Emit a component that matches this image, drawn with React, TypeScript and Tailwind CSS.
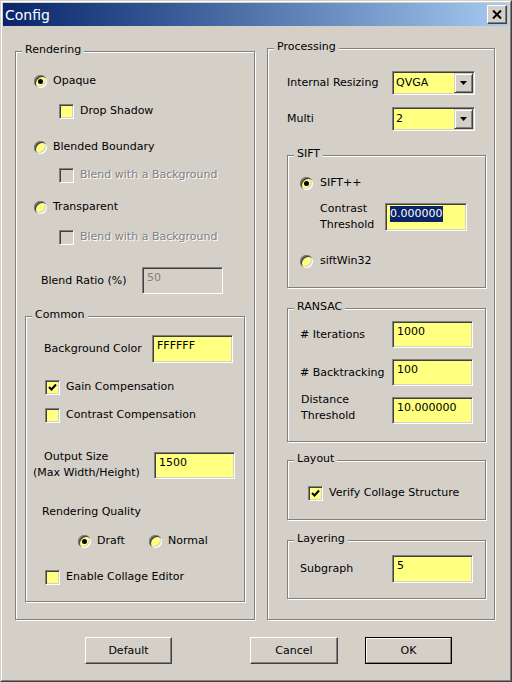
import type {ReactNode} from 'react';

const FACE = 'bg-[#d4d0c8]';

function Radio({checked}: {checked?: boolean}) {
  return (
    <span className="w-[13px] h-[13px] shrink-0 rounded-full bg-[#ffff80] shadow-[inset_1px_1px_0_#808080,inset_2px_2px_0_#404040,inset_-1px_-1px_0_#ffffff,inset_-2px_-2px_0_#d4d0c8] flex items-center justify-center">
      {checked && <span className="w-[5px] h-[5px] rounded-full bg-black" />}
    </span>
  );
}

function Check({checked, disabled}: {checked?: boolean; disabled?: boolean}) {
  return (
    <span
      className={`w-[15px] h-[15px] shrink-0 border border-t-[#808080] border-l-[#808080] border-b-white border-r-white shadow-[inset_1px_1px_0_#404040,inset_-1px_-1px_0_#d4d0c8] flex items-center justify-center ${
        disabled ? 'bg-[#d4d0c8]' : 'bg-[#ffff80]'
      }`}
    >
      {checked && (
        <svg width="9" height="9" viewBox="0 0 9 9">
          <polyline points="1,4 3.5,6.5 8,1.5" fill="none" stroke="#000" strokeWidth="2" />
        </svg>
      )}
    </span>
  );
}

function Edit({value, className, disabled, selected}: {value: string; className: string; disabled?: boolean; selected?: boolean}) {
  return (
    <div
      className={`shrink-0 border border-t-[#808080] border-l-[#808080] border-b-white border-r-white shadow-[inset_1px_1px_0_#404040,inset_-1px_-1px_0_#d4d0c8] pl-[4px] pt-[2px] leading-[16px] ${
        disabled ? 'bg-[#d4d0c8] text-[#808080]' : 'bg-[#ffff80] text-black'
      } ${className}`}
    >
      {selected ? <span className="bg-[#0a246a] text-white inline-block">{value}</span> : value}
    </div>
  );
}

function Combo({value}: {value: string}) {
  return (
    <div className="w-[83px] h-[24px] shrink-0 flex items-center border border-t-[#808080] border-l-[#808080] border-b-white border-r-white shadow-[inset_1px_1px_0_#404040,inset_-1px_-1px_0_#d4d0c8] bg-[#ffff80] p-[1px]">
      <span className="flex-1 pl-[2px]">{value}</span>
      <span className="w-[19px] h-[20px] bg-[#d4d0c8] border border-t-[#d4d0c8] border-l-[#d4d0c8] border-b-[#404040] border-r-[#404040] shadow-[inset_1px_1px_0_#ffffff,inset_-1px_-1px_0_#808080] flex items-center justify-center">
        <svg width="7" height="4" viewBox="0 0 7 4">
          <polygon points="0,0 7,0 3.5,4" fill="#000" />
        </svg>
      </span>
    </div>
  );
}

function Group({label, className, children}: {label: string; className: string; children?: ReactNode}) {
  return (
    <div className={`relative shrink-0 flex flex-col border border-[#808080] shadow-[inset_1px_1px_0_#ffffff,1px_1px_0_#ffffff] ${className}`}>
      <span className="absolute -top-[10px] left-[6px] px-[3px] bg-[#d4d0c8] leading-[16px] whitespace-nowrap">{label}</span>
      {children}
    </div>
  );
}

function Button({children, primary, className}: {children: ReactNode; primary?: boolean; className: string}) {
  if (primary) {
    return (
      <div className={`h-[27px] border border-black ${className}`}>
        <div className="w-full h-full flex items-center justify-center border border-t-white border-l-white border-b-[#808080] border-r-[#808080]">
          {children}
        </div>
      </div>
    );
  }
  return (
    <div
      className={`h-[27px] flex items-center justify-center border border-t-white border-l-white border-r-[#404040] border-b-[#404040] shadow-[inset_-1px_-1px_0_#808080] ${className}`}
    >
      {children}
    </div>
  );
}

const dim = 'text-[#808080] [text-shadow:1px_1px_0_#ffffff]';

export default function App() {
  return (
    <div
      className={`w-[512px] h-[682px] ${FACE} border border-t-[#d4d0c8] border-l-[#d4d0c8] border-r-[#404040] border-b-[#404040] font-['DejaVu_Sans',sans-serif] text-[11px] leading-[16px] text-black overflow-hidden`}
    >
      <div className="w-full h-full border border-t-white border-l-white border-r-[#808080] border-b-[#808080]">
        {/* title bar */}
        <div className="mt-[1px] ml-[1px] mr-[2px] h-[23px] bg-linear-to-r from-[#0a246a] to-[#a6caf0] flex items-center justify-between pl-[2px] pr-[1px]">
          <span className="text-white text-[14px] leading-[18px]">Config</span>
          <span className="w-[20px] h-[19px] bg-[#d4d0c8] border border-t-white border-l-white border-r-[#404040] border-b-[#404040] shadow-[inset_-1px_-1px_0_#808080] flex items-center justify-center">
            <svg width="10" height="9" viewBox="0 0 10 9">
              <path d="M1 0.5 L9 8.5 M9 0.5 L1 8.5" stroke="#000" strokeWidth="2" />
            </svg>
          </span>
        </div>

        <div className="flex items-start pl-[13px]">
          {/* left column */}
          <Group label="Rendering" className="mt-[25px] w-[240px] h-[569px]">
            <div className="flex items-center h-[16px] mt-[21px] ml-[18px] gap-[6px]">
              <Radio checked />
              <span>Opaque</span>
            </div>
            <div className="flex items-center h-[16px] mt-[14px] ml-[43px] gap-[6px]">
              <Check />
              <span>Drop Shadow</span>
            </div>
            <div className="flex items-center h-[16px] mt-[20px] ml-[18px] gap-[6px]">
              <Radio />
              <span>Blended Boundary</span>
            </div>
            <div className="flex items-center h-[16px] mt-[12px] ml-[43px] gap-[6px]">
              <Check disabled />
              <span className={dim}>Blend with a Background</span>
            </div>
            <div className="flex items-center h-[16px] mt-[16px] ml-[18px] gap-[6px]">
              <Radio />
              <span>Transparent</span>
            </div>
            <div className="flex items-center h-[16px] mt-[14px] ml-[43px] gap-[6px]">
              <Check disabled />
              <span className={dim}>Blend with a Background</span>
            </div>
            <div className="flex items-center h-[27px] mt-[22px] ml-[25px]">
              <span className="w-[101px]">Blend Ratio (%)</span>
              <Edit disabled value="50" className="w-[81px] h-[27px]" />
            </div>

            <Group label="Common" className="mt-[22px] ml-[9px] w-[220px] h-[286px]">
              <div className="flex items-center h-[28px] mt-[18px] ml-[18px]">
                <span className="w-[108px]">Background Color</span>
                <Edit value="FFFFFF" className="w-[81px] h-[28px]" />
              </div>
              <div className="flex items-center h-[16px] mt-[16px] ml-[19px] gap-[6px]">
                <Check checked />
                <span>Gain Compensation</span>
              </div>
              <div className="flex items-center h-[16px] mt-[12px] ml-[19px] gap-[6px]">
                <Check />
                <span>Contrast Compensation</span>
              </div>
              <div className="flex items-center h-[32px] mt-[26px] ml-[7px]">
                <div className="w-[121px] flex flex-col">
                  <span className="ml-[11px]">Output Size</span>
                  <span>(Max Width/Height)</span>
                </div>
                <Edit value="1500" className="w-[81px] h-[27px]" />
              </div>
              <div className="h-[16px] mt-[23px] ml-[16px]">Rendering Quality</div>
              <div className="flex items-center h-[16px] mt-[13px] ml-[52px]">
                <div className="w-[71px] flex items-center gap-[6px]">
                  <Radio checked />
                  <span>Draft</span>
                </div>
                <div className="flex items-center gap-[6px]">
                  <Radio />
                  <span>Normal</span>
                </div>
              </div>
              <div className="flex items-center h-[16px] mt-[20px] ml-[19px] gap-[6px]">
                <Check />
                <span>Enable Collage Editor</span>
              </div>
            </Group>
          </Group>

          {/* right column */}
          <Group label="Processing" className="mt-[22px] ml-[12px] w-[228px] h-[572px]">
            <div className="flex items-center h-[24px] mt-[22px] ml-[19px]">
              <span className="w-[105px]">Internal Resizing</span>
              <Combo value="QVGA" />
            </div>
            <div className="flex items-center h-[24px] mt-[12px] ml-[19px]">
              <span className="w-[105px]">Multi</span>
              <Combo value="2" />
            </div>

            <Group label="SIFT" className="mt-[24px] ml-[19px] w-[199px] h-[133px]">
              <div className="flex items-center h-[16px] mt-[19px] ml-[12px] gap-[7px]">
                <Radio checked />
                <span>SIFT++</span>
              </div>
              <div className="flex items-center h-[32px] mt-[10px] ml-[32px]">
                <div className="w-[65px] flex flex-col">
                  <span>Contrast</span>
                  <span>Threshold</span>
                </div>
                <Edit selected value="0.000000" className="w-[82px] h-[28px]" />
              </div>
              <div className="flex items-center h-[16px] mt-[20px] ml-[12px] gap-[7px]">
                <Radio />
                <span>siftWin32</span>
              </div>
            </Group>

            <Group label="RANSAC" className="mt-[20px] ml-[19px] w-[199px] h-[134px]">
              <div className="flex items-center h-[27px] mt-[12px] ml-[12px]">
                <span className="w-[92px]"># Iterations</span>
                <Edit value="1000" className="w-[81px] h-[27px]" />
              </div>
              <div className="flex items-center h-[27px] mt-[11px] ml-[12px]">
                <span className="w-[92px]"># Backtracking</span>
                <Edit value="100" className="w-[81px] h-[27px]" />
              </div>
              <div className="flex items-start h-[27px] mt-[11px] ml-[13px]">
                <div className="w-[91px] -mt-[5px] flex flex-col">
                  <span>Distance</span>
                  <span>Threshold</span>
                </div>
                <Edit value="10.000000" className="w-[81px] h-[27px]" />
              </div>
            </Group>

            <Group label="Layout" className="mt-[18px] ml-[19px] w-[199px] h-[60px]">
              <div className="flex items-center h-[16px] mt-[24px] ml-[20px] gap-[6px]">
                <Check checked />
                <span>Verify Collage Structure</span>
              </div>
            </Group>

            <Group label="Layering" className="mt-[20px] ml-[19px] w-[199px] h-[59px]">
              <div className="flex items-center h-[28px] mt-[14px] ml-[12px]">
                <span className="w-[92px]">Subgraph</span>
                <Edit value="5" className="w-[81px] h-[28px]" />
              </div>
            </Group>
          </Group>
        </div>

        {/* buttons */}
        <div className="flex mt-[17px] pl-[83px]">
          <Button className="w-[87px]">Default</Button>
          <Button className="w-[88px] ml-[78px]">Cancel</Button>
          <Button primary className="w-[87px] ml-[27px]">OK</Button>
        </div>
      </div>
    </div>
  );
}
